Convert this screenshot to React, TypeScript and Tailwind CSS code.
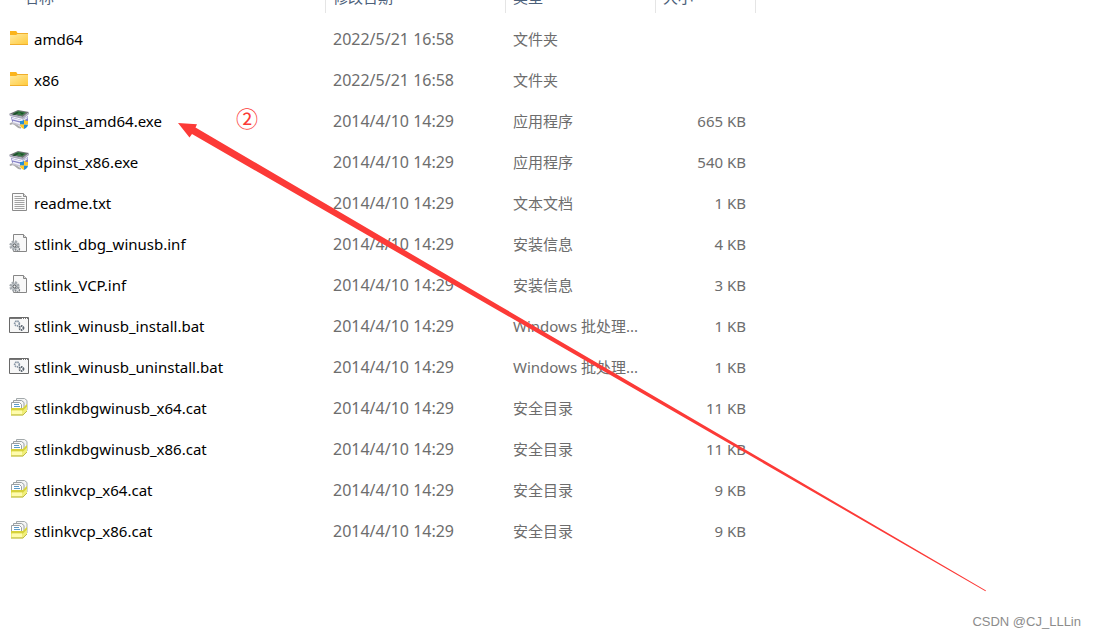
import React from "react";

type IconKind = "folder" | "installer" | "text" | "inf" | "batch" | "catalog";

interface FileItem {
  name: string;
  date: string;
  type: string;
  size: string;
  icon: IconKind;
}

const files: FileItem[] = [
  { name: "amd64", date: "2022/5/21 16:58", type: "文件夹", size: "", icon: "folder" },
  { name: "x86", date: "2022/5/21 16:58", type: "文件夹", size: "", icon: "folder" },
  { name: "dpinst_amd64.exe", date: "2014/4/10 14:29", type: "应用程序", size: "665 KB", icon: "installer" },
  { name: "dpinst_x86.exe", date: "2014/4/10 14:29", type: "应用程序", size: "540 KB", icon: "installer" },
  { name: "readme.txt", date: "2014/4/10 14:29", type: "文本文档", size: "1 KB", icon: "text" },
  { name: "stlink_dbg_winusb.inf", date: "2014/4/10 14:29", type: "安装信息", size: "4 KB", icon: "inf" },
  { name: "stlink_VCP.inf", date: "2014/4/10 14:29", type: "安装信息", size: "3 KB", icon: "inf" },
  { name: "stlink_winusb_install.bat", date: "2014/4/10 14:29", type: "Windows 批处理...", size: "1 KB", icon: "batch" },
  { name: "stlink_winusb_uninstall.bat", date: "2014/4/10 14:29", type: "Windows 批处理...", size: "1 KB", icon: "batch" },
  { name: "stlinkdbgwinusb_x64.cat", date: "2014/4/10 14:29", type: "安全目录", size: "11 KB", icon: "catalog" },
  { name: "stlinkdbgwinusb_x86.cat", date: "2014/4/10 14:29", type: "安全目录", size: "11 KB", icon: "catalog" },
  { name: "stlinkvcp_x64.cat", date: "2014/4/10 14:29", type: "安全目录", size: "9 KB", icon: "catalog" },
  { name: "stlinkvcp_x86.cat", date: "2014/4/10 14:29", type: "安全目录", size: "9 KB", icon: "catalog" },
];

const iconShapes: Record<IconKind, React.ReactNode> = {
  folder: (
    <>
      <path d="M1 3h6l1 2h11v12H1z" fill="#f0ae2c" />
      <path d="M1 3h6l1.500 2L7 7H1z" fill="#fbb41c" />
      <path d="M1 7h6l1.500-1H19v10H1z" fill="url(#folderFill)" />
    </>
  ),
  installer: (
    <>
      <path d="M1 14.500c1.500-2 4-1.500 6 .5s3 3 5 2.500" stroke="#a9a9a9" strokeWidth="1.800" fill="none" />
      <path d="M3 10.500l10 3 6-3v3l-6 3-10-3z" fill="#c4c2d0" />
      <path d="M2 7l11 3 6-4v5l-6 3-10-2.500z" fill="#8581c6" />
      <path d="M3 8.500l10 2.500L18.500 7.500M4 11.500l9 2.500" stroke="#f0f0fa" strokeWidth="1.300" fill="none" />
      <path d="M0 4l9-4 11 2-6 5z" fill="#6f7375" />
      <path d="M4 3.500L9 1l8 1.500-4 3z" fill="#347c42" />
      <path d="M3 4.500L8 2l2 .5L6 5zM10 2l5 1-2 1.500z" fill="#1c4d2a" />
      <path d="M0 4l14 3 6-5v2l-6 5L1 6z" fill="#aaa9bd" />
      <path d="M11 11c2 0 3-.5 4-1.500v5h-4zM15 14.500h4c0 2-2 3.500-4 4.500z" fill="#278ed4" />
      <path d="M15 9.500c1 1 2 1.500 4 1.500v3.500h-4zM11 14.500h4V19c-2-1-4-2.500-4-4.500z" fill="#ffc928" />
    </>
  ),
  text: (
    <>
      <path d="M3.500 1.500h11l3 3v14h-14z" fill="#fafafa" stroke="#8b8b8b" />
      <path d="M14.500 1.500v3h3" fill="#ddd" stroke="#8b8b8b" />
      <path
        d="M5.500 4.500h7M5.500 6.500h10M5.500 8.500h10M5.500 10.500h10M5.500 12.500h10M5.500 14.500h10M5.500 16.500h10"
        stroke="#a2a2a2"
      />
    </>
  ),
  inf: (
    <>
      <path d="M4.500 1.500h10l3 3v14h-13z" fill="#f8f8f8" stroke="#868686" />
      <path d="M14.500 1.500v3h3" fill="#ddd" stroke="#868686" />
      <circle cx="5.500" cy="12.500" r="4" fill="#c1c6ca" stroke="#a3a9ae" strokeWidth="2.400" strokeDasharray="2 1.140" />
      <circle cx="5.500" cy="12.500" r="1.500" fill="#f1f1f1" stroke="#4e5357" />
      <circle cx="8.500" cy="16" r="2" fill="#dde0e2" stroke="#7b8085" strokeWidth="1.300" strokeDasharray="1.300 .8" />
    </>
  ),
  batch: (
    <>
      <path d="M.5 2.500h19v15H.5z" fill="#f7f7f7" stroke="#696969" />
      <path d="M1 3.500h18" stroke="#777" />
      <path d="M13 3.500h1M15 3.500h1M17 3.500h1" stroke="#fff" />
      <circle cx="8" cy="8.500" r="2.300" fill="none" stroke="#8795a4" strokeWidth="1.800" strokeDasharray="1.400 .6" />
      <circle cx="12.500" cy="13" r="2" fill="none" stroke="#59636e" strokeWidth="1.800" strokeDasharray="1.400 .6" />
    </>
  ),
  catalog: (
    <>
      <path d="M7.500 1.500h8l2.500 2V13H7.500z" fill="#f4f5f5" stroke="#a3a9ab" />
      <path d="M4.500 3.500h8l2.500 2V14H4.500z" fill="#f6f7f7" stroke="#9aa0a3" />
      <path d="M2.500 5.500h8l2 2V14h-10z" fill="#fff" stroke="#9aa0a3" />
      <path d="M5 7.500h5M5 9.500h6" stroke="#5d9bc9" />
      <path d="M2 11h12l4-4v7l-4 4.500H2z" fill="#f0ee79" />
      <path d="M2 11h12l4-4v2.500L14 13.500H2z" fill="#d6d13a" />
      <path d="M2 18h12l4-4" stroke="#bdb94a" fill="none" />
      <path d="M3 13.500h10V17H3z" fill="#fffcae" />
    </>
  ),
};

const FileIcon: React.FC<{ kind: IconKind }> = ({ kind }) => (
  <svg className="mb-0.5 h-5 w-5 shrink-0" viewBox="0 0 20 20" aria-hidden="true">
    {iconShapes[kind]}
  </svg>
);

const App: React.FC = () => {
  return (
    <main className="relative min-h-screen overflow-hidden bg-white font-['Noto_Sans','Noto_Sans_CJK_SC',sans-serif] text-[15px] leading-5 text-[#6d6d6d]">
      <svg className="absolute h-0 w-0" aria-hidden="true">
        <linearGradient id="folderFill" x1="0" y1="0" x2="1" y2="1">
          <stop offset="0" stopColor="#ffe9a0" />
          <stop offset="1" stopColor="#ffcb3d" />
        </linearGradient>
      </svg>

      {/* File list, scrolled slightly past its header */}
      <table className="-mt-[19px] w-[756px] table-fixed border-collapse text-left">
        <colgroup>
          <col className="w-[326px]" />
          <col className="w-[180px]" />
          <col className="w-[150px]" />
          <col className="w-[100px]" />
        </colgroup>
        <thead className="text-[#4c607a]">
          <tr>
            <th scope="col" className="p-0 pb-[5px] font-normal">
              <div className="flex h-8 items-center border-r border-[#e5e5e5] pl-6">名称</div>
            </th>
            <th scope="col" className="p-0 pb-[5px] font-normal">
              <div className="flex h-8 items-center border-r border-[#e5e5e5] pl-[7px]">修改日期</div>
            </th>
            <th scope="col" className="p-0 pb-[5px] font-normal">
              <div className="flex h-8 items-center border-r border-[#e5e5e5] pl-[7px]">类型</div>
            </th>
            <th scope="col" className="p-0 pb-[5px] font-normal">
              <div className="flex h-8 items-center border-r border-[#e5e5e5] pl-[7px]">大小</div>
            </th>
          </tr>
        </thead>
        <tbody>
          {files.map((file) => (
            <tr key={file.name} className="h-[41px] whitespace-nowrap">
              <td className="p-0 pl-[9px] text-black">
                <div className="flex items-center gap-[5px]">
                  <FileIcon kind={file.icon} />
                  <span>{file.name}</span>
                </div>
              </td>
              <td className="p-0 pl-[7px] text-base leading-5">{file.date}</td>
              <td className="p-0 pl-[7px]">{file.type}</td>
              <td className="p-0 pr-[10px] text-right">{file.size}</td>
            </tr>
          ))}
        </tbody>
      </table>

      {/* Annotation */}
      <svg className="pointer-events-none absolute top-0 left-0" width="1000" height="600" aria-hidden="true">
        <path d="M178 123L197 124.300L195.500 127.500L500 306L986 590.500L985.500 591.200L500 311.500L192 134L189.500 137.500Z" fill="#fc3a37" />
      </svg>
      <span className="absolute top-[106px] left-[236px] text-[22px] leading-6 text-[#fc3a37]">②</span>

      <span className="absolute right-[14px] bottom-[6px] font-['Liberation_Sans',sans-serif] text-[13px] text-[#8c8c8c]">
        CSDN @CJ_LLLin
      </span>
    </main>
  );
};

export default App;
